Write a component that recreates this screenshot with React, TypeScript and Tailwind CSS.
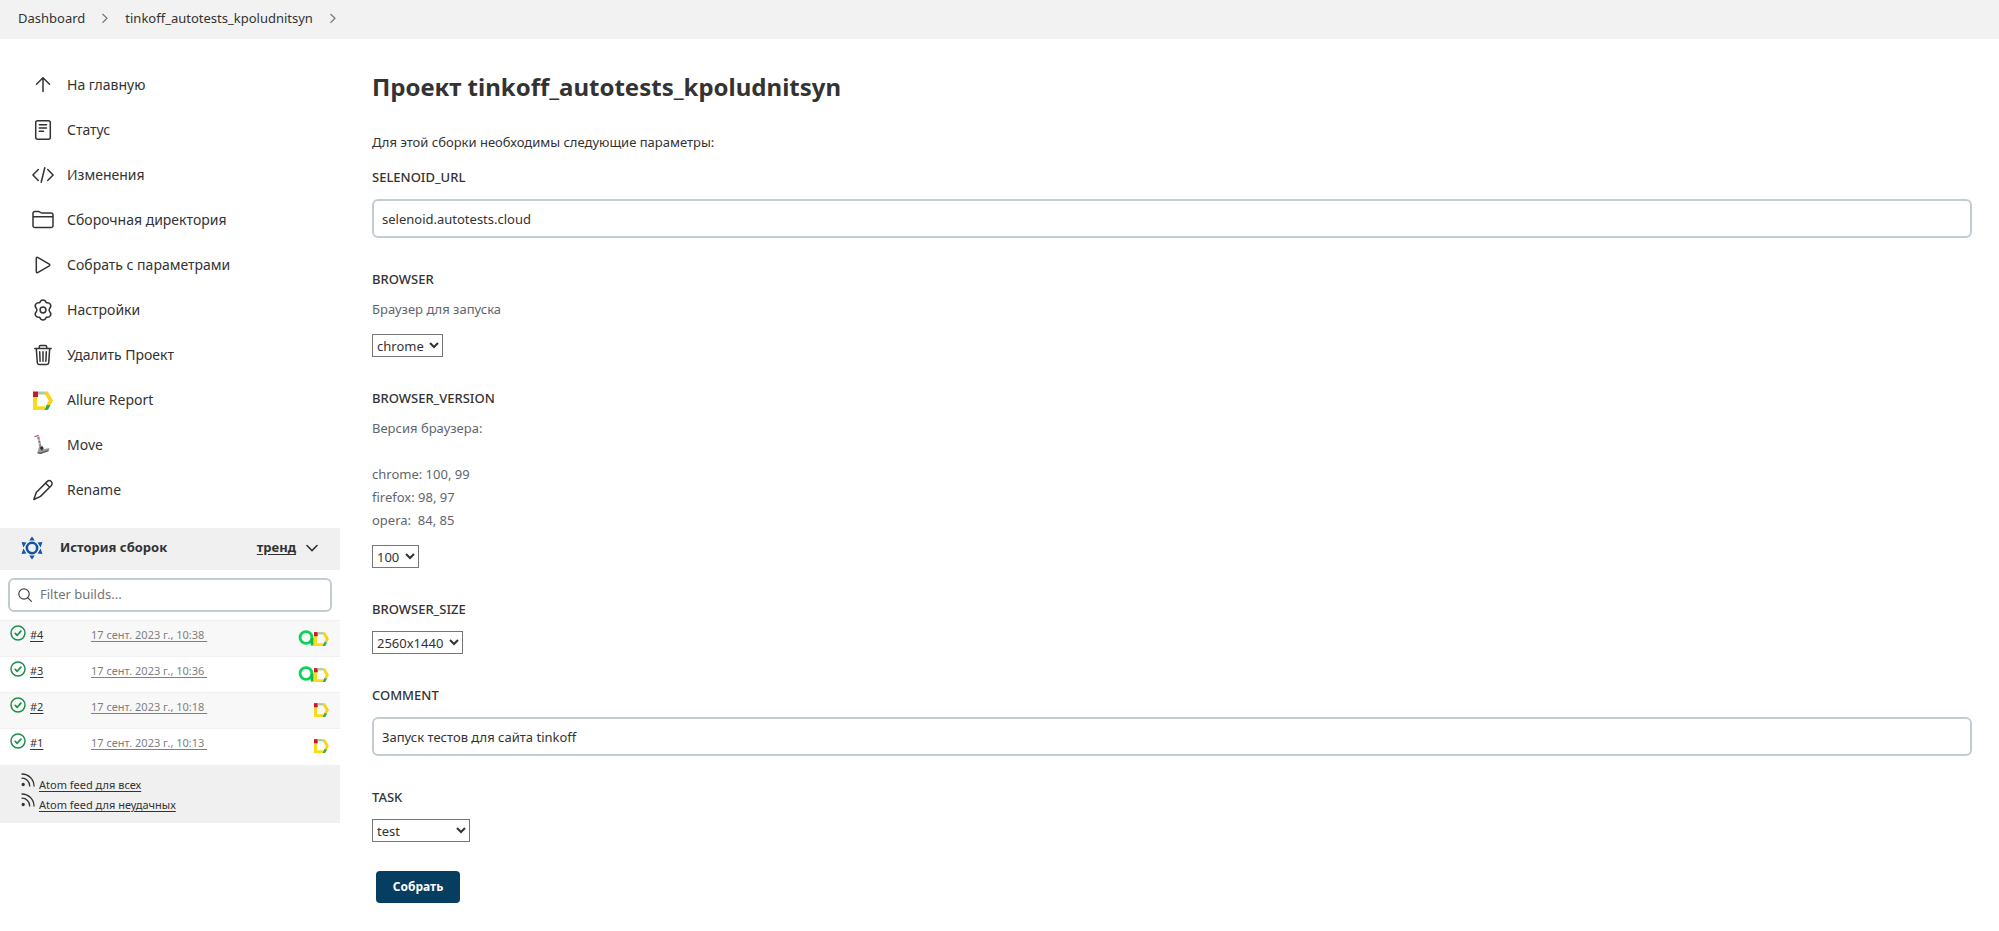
import React from "react";

type IconProps = { children: React.ReactNode };

function Outline({ children }: IconProps) {
  return (
    <svg
      viewBox="0 0 24 24"
      className="size-6 shrink-0"
      fill="none"
      stroke="#333"
      strokeWidth="1.5"
      strokeLinecap="round"
      strokeLinejoin="round"
      aria-hidden="true"
    >
      {children}
    </svg>
  );
}

const UpIcon = () => (
  <Outline>
    <path d="M12 18.500V5M5.500 11.200L12 4.800l6.500 6.400" />
  </Outline>
);

const StatusIcon = () => (
  <Outline>
    <rect x="4.700" y="2.700" width="14.600" height="18.600" rx="2" />
    <path d="M8.300 6.800h7.200M8.300 10h7.200M8.300 13.300h4.200" />
  </Outline>
);

const CodeIcon = () => (
  <Outline>
    <path d="M7.300 6.500L1.900 12l5.400 5.500M16.700 6.500l5.400 5.500-5.400 5.500M13.800 4.800L10.200 19.200" />
  </Outline>
);

const FolderIcon = () => (
  <Outline>
    <path d="M2 17.800V5.200a1.800 1.800 0 0 1 1.800-1.800h3.600c.5 0 .8.1 1.200.4l1 .7c.4.3.7.4 1.200.4h9.400A1.800 1.800 0 0 1 22 6.700v11.100a1.800 1.800 0 0 1-1.800 1.800H3.800A1.800 1.800 0 0 1 2 17.800zM2 8.800h20" />
  </Outline>
);

const PlayIcon = () => (
  <Outline>
    <path d="M5.300 5.200v13.600c0 .8.700 1.200 1.300.9l11.700-6.900c.6-.4.6-1.200 0-1.600L6.600 4.300c-.6-.3-1.300.1-1.300.9z" />
  </Outline>
);

const GearIcon = () => (
  <Outline>
    <circle cx="12" cy="12" r="2.900" />
    <path d="M8.700 4.800C9.300 3.200 10.300 2 12 2s2.700 1.200 3.300 2.800c1.700-.3 3.200 0 4.100 1.500s.3 2.900-.8 4.200c-.7.9-.7 2.100 0 3 1.100 1.300 1.700 2.700.8 4.200s-2.400 1.800-4.100 1.500C14.700 20.800 13.700 22 12 22s-2.700-1.200-3.300-2.800c-1.700.3-3.200 0-4.100-1.500s-.3-2.900.8-4.200c.7-.9.700-2.100 0-3-1.100-1.300-1.700-2.700-.8-4.200s2.400-1.800 4.100-1.500z" />
  </Outline>
);

const TrashIcon = () => (
  <Outline>
    <path d="M3.800 5.500h16.400M8.300 5.300V3.700c0-.8.5-1.200 1.200-1.200h5c.7 0 1.200.4 1.200 1.200v1.600M5.300 5.500l1 14.300c.1 1 .8 1.700 1.800 1.700h7.800c1 0 1.700-.7 1.800-1.700l1-14.300M8.700 8.800l.4 9.400M12 8.800v9.400M15.300 8.800l-.4 9.400" />
  </Outline>
);

const PencilIcon = () => (
  <Outline>
    <path d="M2.800 21.500l2.600-7.200L16.100 3.600c1.200-1.200 2.900-1.300 4.100-.1s1.200 3 0 4.200L9.500 18.400zM14.700 5.200l4 4" />
  </Outline>
);

function AllureMark({ className }: { className: string }) {
  return (
    <svg viewBox="0 0 20 20" className={className} aria-hidden="true">
      <path d="M0 6h4v10.300H12V20H0z" fill="#f8dc1c" />
      <path d="M0 1.500h5V7H0z" fill="#d0142c" />
      <path d="M5 1.500h7v3H5z" fill="#a9cfa0" />
      <path d="M12 1.500H14.700L20 10.500 17.500 15h-4l2.300-4.500-3.800-6z" fill="#fbd214" />
      <path d="M13.500 15h4l-1.700 3.600c-.4.900-.9 1.400-1.900 1.400H11.500z" fill="#35a853" />
    </svg>
  );
}

const AllureIcon = () => (
  <span className="flex size-6 shrink-0 items-center pl-0.5">
    <AllureMark className="size-5" />
  </span>
);

const MoveIcon = () => (
  <svg viewBox="0 0 24 24" className="size-6 shrink-0" fill="none" aria-hidden="true">
    <path d="M3.500 3.700l3.500-1.200.6 2.500" stroke="#b5475a" strokeWidth="1.200" />
    <path d="M7 2.800l2.600 11.500" stroke="#777" strokeWidth="2" />
    <path d="M7 2.800l2.600 11.500" stroke="#e9b9bf" strokeWidth="1.800" strokeDasharray="1.600 2" />
    <path d="M7.800 14l3.600-1.300 1.600 3.200 5.500-1-.6 2.700-8.500 3.300-2.800-1z" fill="#9c9c9c" />
    <path d="M9.500 14.200l1.700 3.600M6.500 19.600l3 .7 8-2.700" stroke="#555" strokeWidth="1.200" />
    <circle cx="10.800" cy="15" r="1.500" fill="#2b2b2b" />
  </svg>
);

const HistoryIcon = () => (
  <svg viewBox="0 0 24 26" className="h-6 w-6 shrink-0" fill="#1553a4" aria-hidden="true">
    <circle cx="12" cy="13" r="5.600" fill="none" stroke="#1553a4" strokeWidth="2.800" />
    <path d="M12 0.500l3 4.300H9zM12 25.500l3-4.300H9zM.7 6.500l5.200.6-3.200 5.400zM23.300 6.500l-5.200.6 3.200 5.400zM.7 19.500l5.200-.6-3.200-5.400zM23.300 19.500l-5.200-.6 3.200-5.400z" />
  </svg>
);

const Chevron = () => (
  <svg viewBox="0 0 8 12" className="h-3 w-2" fill="none" stroke="#777" strokeWidth="1.200" aria-hidden="true">
    <path d="M1.500 1L6 5.300 1.500 9.700" />
  </svg>
);

const SuccessIcon = () => (
  <svg viewBox="0 0 16 16" className="size-4 shrink-0" fill="none" stroke="#1e8f4b" strokeLinecap="round" strokeLinejoin="round" aria-hidden="true">
    <circle cx="8" cy="8" r="7" strokeWidth="1.500" />
    <path d="M5.200 8.300l2 2 3.700-4.200" strokeWidth="1.700" />
  </svg>
);

const TestOpsIcon = () => (
  <svg viewBox="0 0 17 16" className="h-4 w-4" fill="none" aria-hidden="true">
    <circle cx="8.500" cy="7.500" r="6.300" stroke="#08d455" strokeWidth="3" />
    <path d="M15 8v8" stroke="#0bb84b" strokeWidth="3" />
  </svg>
);

const FeedIcon = () => (
  <svg viewBox="0 0 14 14" className="size-3.5 shrink-0" fill="none" stroke="#333" strokeWidth="1.300" strokeLinecap="round" aria-hidden="true">
    <path d="M1 1c6.500 0 12 5.500 12 12M1 5.200c4.300 0 7.700 3.500 7.700 7.800" />
    <circle cx="2.200" cy="11.500" r="1" fill="#333" />
  </svg>
);

const tasks = [
  { label: "На главную", Icon: UpIcon },
  { label: "Статус", Icon: StatusIcon },
  { label: "Изменения", Icon: CodeIcon },
  { label: "Сборочная директория", Icon: FolderIcon },
  { label: "Собрать с параметрами", Icon: PlayIcon },
  { label: "Настройки", Icon: GearIcon },
  { label: "Удалить Проект", Icon: TrashIcon },
  { label: "Allure Report", Icon: AllureIcon },
  { label: "Move", Icon: MoveIcon },
  { label: "Rename", Icon: PencilIcon },
];

const builds = [
  { id: 4, time: "17 сент. 2023 г., 10:38", testOps: true },
  { id: 3, time: "17 сент. 2023 г., 10:36", testOps: true },
  { id: 2, time: "17 сент. 2023 г., 10:18", testOps: false },
  { id: 1, time: "17 сент. 2023 г., 10:13", testOps: false },
];

function Sidebar() {
  return (
    <aside className="w-[340px] shrink-0">
      <nav className="pt-[23px] pb-4">
        {tasks.map(({ label, Icon }) => (
          <a key={label} href="#" className="flex h-[45px] items-center gap-3 pl-[31px] text-sm">
            <Icon />
            {label}
          </a>
        ))}
      </nav>
      <section>
        <div className="flex h-[42px] items-center bg-[#f0f0f0] pr-[18px] pb-0.5 pl-5 font-bold">
          <HistoryIcon />
          <h2 className="ml-4 flex-1">История сборок</h2>
          <a href="#" className="underline underline-offset-2">тренд</a>
          <button type="button" aria-label="Свернуть" className="ml-1.5 p-1">
            <svg viewBox="0 0 12 8" className="h-2 w-3" fill="none" stroke="#333" strokeWidth="1.600" strokeLinecap="round">
              <path d="M1 1.500l5 5 5-5" />
            </svg>
          </button>
        </div>
        <div className="p-2">
          <label className="flex h-[34px] items-center gap-2 rounded-md border-2 border-[#c3ccd1] bg-white pl-2">
            <svg viewBox="0 0 14 14" className="size-3.5" fill="none" stroke="#444" strokeWidth="1.200" strokeLinecap="round" aria-hidden="true">
              <circle cx="6" cy="6" r="5.200" />
              <path d="M10 10l3.400 3.400" />
            </svg>
            <input aria-label="Filter builds" placeholder="Filter builds..." className="min-w-0 flex-1 text-[13px] outline-none placeholder:text-[#757575]" />
          </label>
        </div>
        <table className="w-full text-[11px] leading-4">
          <tbody>
            {builds.map((b) => (
              <tr key={b.id} className="h-9 border-t border-[#f0f0f0] align-top odd:bg-[#f8f8f8]">
                <td className="w-[91px] pt-1 pl-2.5">
                  <span className="flex items-start gap-1">
                    <SuccessIcon />
                    <a href="#" className="pt-0.5 underline underline-offset-2">#{b.id}</a>
                  </span>
                </td>
                <td className="pt-1.5">
                  <a href="#" className="whitespace-pre text-[#808080] underline underline-offset-2">{b.time + " "}</a>
                </td>
                <td className="pt-[9px] pr-[11px]">
                  <span className="flex items-center justify-end">
                    {b.testOps && <TestOpsIcon />}
                    <AllureMark className="size-[15px]" />
                  </span>
                </td>
              </tr>
            ))}
          </tbody>
        </table>
        <div className="flex flex-col bg-[#f0f0f0] pt-2 pb-2.5 pl-[21px] text-[11px]">
          {["Atom feed для всех", "Atom feed для неудачных"].map((t) => (
            <a key={t} href="#" className="flex h-5 items-start gap-1 leading-6 underline underline-offset-2">
              <FeedIcon />
              {t}
            </a>
          ))}
        </div>
      </section>
    </aside>
  );
}

type FieldProps = {
  name: string;
  description?: string;
  value?: string;
  options?: string[];
  width?: string;
};

function Field({ name, description, value, options, width }: FieldProps) {
  return (
    <div className="flex flex-col items-start">
      <label htmlFor={name} className="leading-6 font-medium">{name}</label>
      {description && (
        <p className="mt-[7px] mb-[3px] leading-[23px] whitespace-pre text-[#5f6670]">{description}</p>
      )}
      {options ? (
        <select id={name} className={`mt-2.5 h-[23px] border border-[#767676] bg-white ${width}`}>
          {options.map((o) => (
            <option key={o}>{o}</option>
          ))}
        </select>
      ) : (
        <input id={name} defaultValue={value} className="mt-2.5 h-[39px] w-full rounded-md border-2 border-[#c3ccd1] px-2 outline-none" />
      )}
    </div>
  );
}

export default function App() {
  return (
    <div className="min-h-screen bg-white font-['Noto_Sans','Open_Sans',sans-serif] text-[13px] text-[#333]">
      <header className="flex h-[39px] items-center gap-4 bg-[#f2f2f2] pb-0.5 pl-[18px]">
        <a href="#">Dashboard</a>
        <Chevron />
        <a href="#">tinkoff_autotests_kpoludnitsyn</a>
        <Chevron />
      </header>
      <div className="flex">
        <Sidebar />
        <main className="min-w-0 flex-1 pt-[31px] pr-[27px] pb-7 pl-8">
          <h1 className="text-2xl leading-[34px] font-bold">Проект tinkoff_autotests_kpoludnitsyn</h1>
          <p className="mt-[26px] leading-6">Для этой сборки необходимы следующие параметры:</p>
          <form className="mt-[11px] flex flex-col items-stretch gap-[29px]" onSubmit={(e) => e.preventDefault()}>
            <Field name="SELENOID_URL" value="selenoid.autotests.cloud" />
            <Field name="BROWSER" description="Браузер для запуска" options={["chrome", "opera"]} width="w-[71px]" />
            <Field
              name="BROWSER_VERSION"
              description={"Версия браузера:\n\nchrome: 100, 99\nfirefox: 98, 97\nopera:  84, 85"}
              options={["100", "99", "98"]}
              width="w-[47px]"
            />
            <Field name="BROWSER_SIZE" options={["2560x1440"]} width="w-[91px]" />
            <Field name="COMMENT" value="Запуск тестов для сайта tinkoff" />
            <Field name="TASK" options={["test"]} width="w-[98px]" />
            <button type="submit" className="ml-1 h-8 w-[84px] rounded bg-[#063e61] text-xs font-bold text-white">
              Собрать
            </button>
          </form>
        </main>
      </div>
    </div>
  );
}
